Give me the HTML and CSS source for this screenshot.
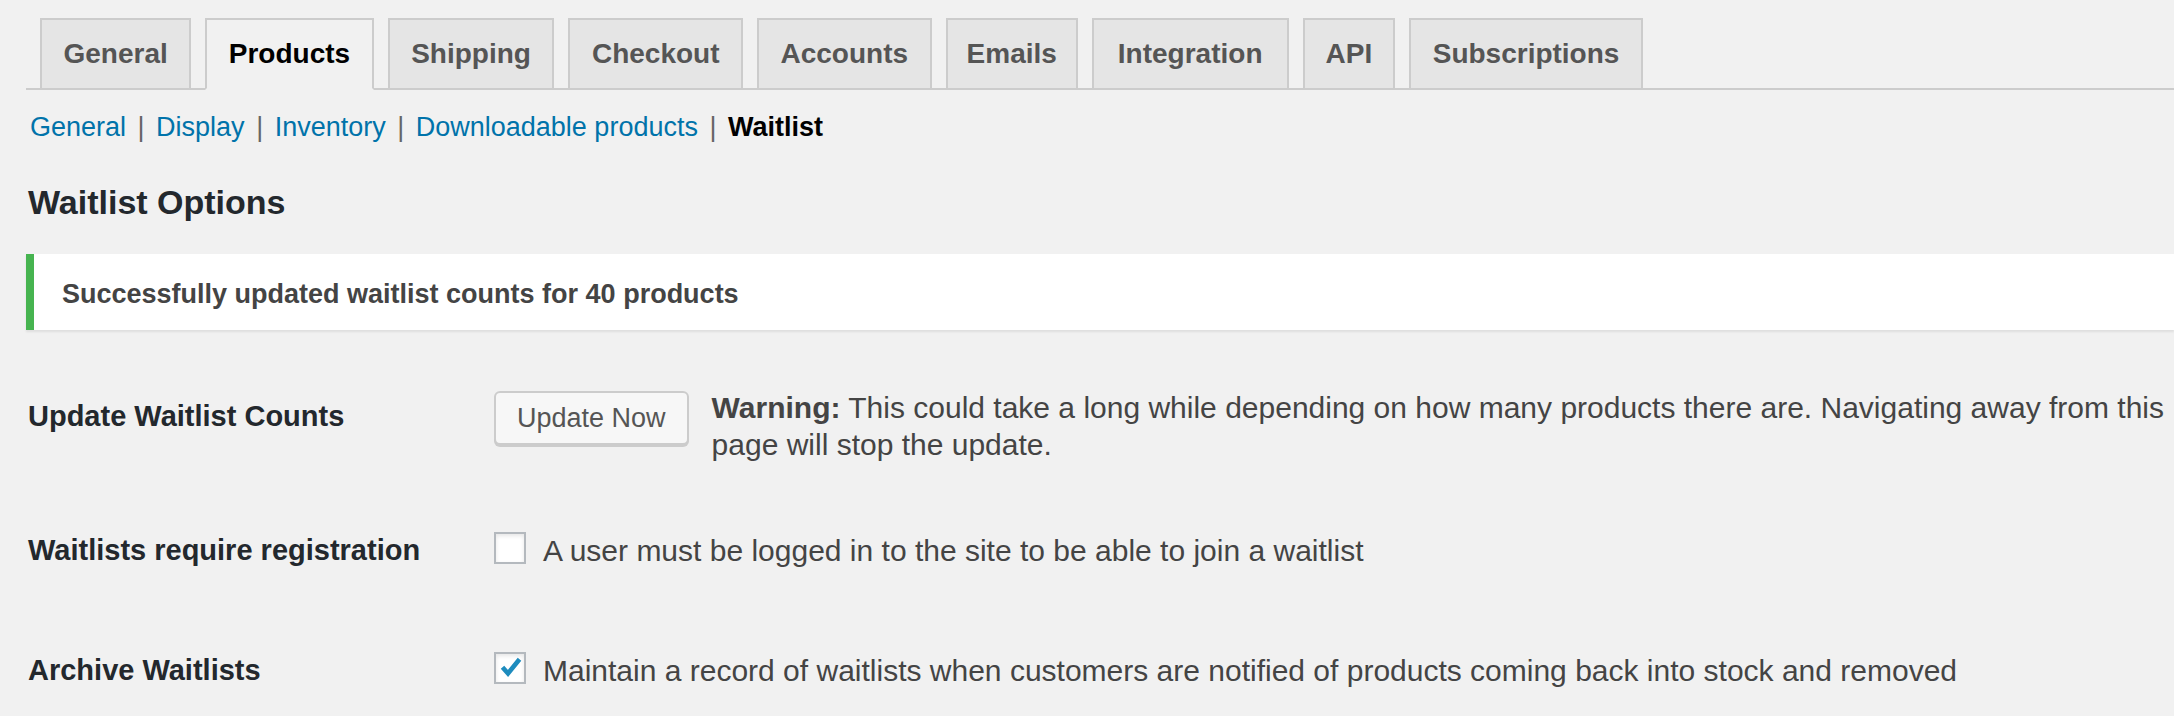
FILE: index.html
```html
<!DOCTYPE html>
<html lang="en">
<head>
<meta charset="utf-8">
<title>Waitlist Options</title>
<link rel="stylesheet" href="styles.css">
</head>
<body>
<div class="wrap">
  <nav class="tabs">
    <a class="tab" href="#">General</a>
    <a class="tab active" href="#">Products</a>
    <a class="tab" href="#">Shipping</a>
    <a class="tab" href="#">Checkout</a>
    <a class="tab" href="#">Accounts</a>
    <a class="tab tab-emails" href="#">Emails</a>
    <a class="tab tab-integration" href="#">Integration</a>
    <a class="tab tab-api" href="#">API</a>
    <a class="tab" href="#">Subscriptions</a>
  </nav>
  <ul class="subnav"><li><a href="#">General</a> | </li><li><a href="#">Display</a> | </li><li><a href="#">Inventory</a> | </li><li><a href="#">Downloadable products</a> | </li><li><a href="#" class="current">Waitlist</a></li></ul>
  <h2 class="title">Waitlist Options</h2>
  <div class="notice"><p>Successfully updated waitlist counts for 40 products</p></div>
  <div class="form">
    <div class="row">
      <div class="label">Update Waitlist Counts</div>
      <div class="field field-update">
        <button class="btn" type="button">Update Now</button>
        <p class="desc"><strong>Warning:</strong> This could take a long while depending on how many products there are. Navigating away from this page will stop the update.</p>
      </div>
    </div>
    <div class="row">
      <div class="label">Waitlists require registration</div>
      <div class="field field-check">
        <span class="cb"></span>
        <span class="cb-text">A user must be logged in to the site to be able to join a waitlist</span>
      </div>
    </div>
    <div class="row">
      <div class="label">Archive Waitlists</div>
      <div class="field field-check">
        <span class="cb"><svg width="28" height="28" viewBox="0 0 28 28"><polyline points="6.5,13.2 12,19.5 23.5,5.2" fill="none" stroke="#1e8cbe" stroke-width="4.6"/></svg></span>
        <span class="cb-text">Maintain a record of waitlists when customers are notified of products coming back into stock and removed</span>
      </div>
    </div>
  </div>
</div>
</body>
</html>
```

FILE: styles.css
```css
html, body {
  margin: 0;
  padding: 0;
  background: #f1f1f1;
  overflow: hidden;
}

body {
  font-family: "Liberation Sans", Arial, sans-serif;
  color: #444;
}

.wrap {
  padding: 18px 0 0 26px;
}

/* Top tabs */
.tabs {
  display: flex;
  gap: 14px;
  padding-left: 14px;
  border-bottom: 2px solid #ccc;
}

.tab {
  display: block;
  padding: 10px 21.5px;
  margin-bottom: -2px;
  border: 2px solid #ccc;
  background: #e5e5e5;
  color: #555;
  font-size: 28px;
  font-weight: bold;
  line-height: 48px;
  text-decoration: none;
}

.tab-emails {
  padding-left: 19px;
  padding-right: 19px;
}

.tab-integration {
  padding-left: 24px;
  padding-right: 24px;
}

.tab-api {
  padding-left: 21px;
  padding-right: 21px;
}

.tab.active {
  background: #f1f1f1;
  color: #000;
  border-bottom-color: #f1f1f1;
}

/* Sub navigation */
.subnav {
  list-style: none;
  margin: 17px 0 0;
  padding: 0;
  font-size: 27px;
  line-height: 40px;
  color: #666;
  white-space: nowrap;
}

.subnav li {
  display: inline;
}

.subnav a {
  padding: 0 4px;
  color: #0073aa;
  text-decoration: none;
}

.subnav a.current {
  color: #000;
  font-weight: bold;
}

/* Heading */
.title {
  margin: 33px 0 0;
  padding-left: 2px;
  font-size: 34px;
  line-height: 44px;
  font-weight: bold;
  color: #23282d;
}

/* Notice */
.notice {
  margin-top: 30px;
  padding: 22px 0 18px 28px;
  background: #fff;
  border-left: 8px solid #46b450;
  box-shadow: 0 2px 2px rgba(0, 0, 0, 0.08);
}

.notice p {
  margin: 0;
  font-size: 27px;
  line-height: 36px;
  font-weight: bold;
  color: #444;
}

/* Form rows */
.form {
  margin-top: 31px;
}

.row {
  display: flex;
}

.label {
  flex: none;
  box-sizing: border-box;
  width: 468px;
  padding: 38px 0 0 2px;
  font-size: 29px;
  line-height: 34px;
  font-weight: bold;
  color: #23282d;
}

.field {
  flex: 1;
  display: flex;
  align-items: flex-start;
  min-width: 0;
}

.field-update {
  padding: 30px 0 32px;
}

.field-check {
  padding: 37px 0 46px;
}

.btn {
  flex: none;
  height: 54px;
  margin: 0;
  padding: 0 21px;
  font-family: "Liberation Sans", Arial, sans-serif;
  font-size: 27px;
  color: #555;
  background: #f7f7f7;
  border: 2px solid #ccc;
  border-radius: 6px;
  box-shadow: 0 2px 0 #ccc;
}

.desc {
  flex: none;
  width: 1475px;
  margin: -2px 0 0 23px;
  font-size: 30px;
  line-height: 37px;
  color: #444;
}

.desc strong {
  font-weight: bold;
}

.cb {
  flex: none;
  box-sizing: border-box;
  width: 32px;
  height: 32px;
  border: 2px solid #b4b9be;
  background: #fff;
  box-shadow: inset 0 2px 4px rgba(0, 0, 0, 0.1);
}

.cb svg {
  display: block;
}

.cb-text {
  margin-left: 17px;
  font-size: 30px;
  line-height: 37px;
  color: #444;
  white-space: nowrap;
}
```
